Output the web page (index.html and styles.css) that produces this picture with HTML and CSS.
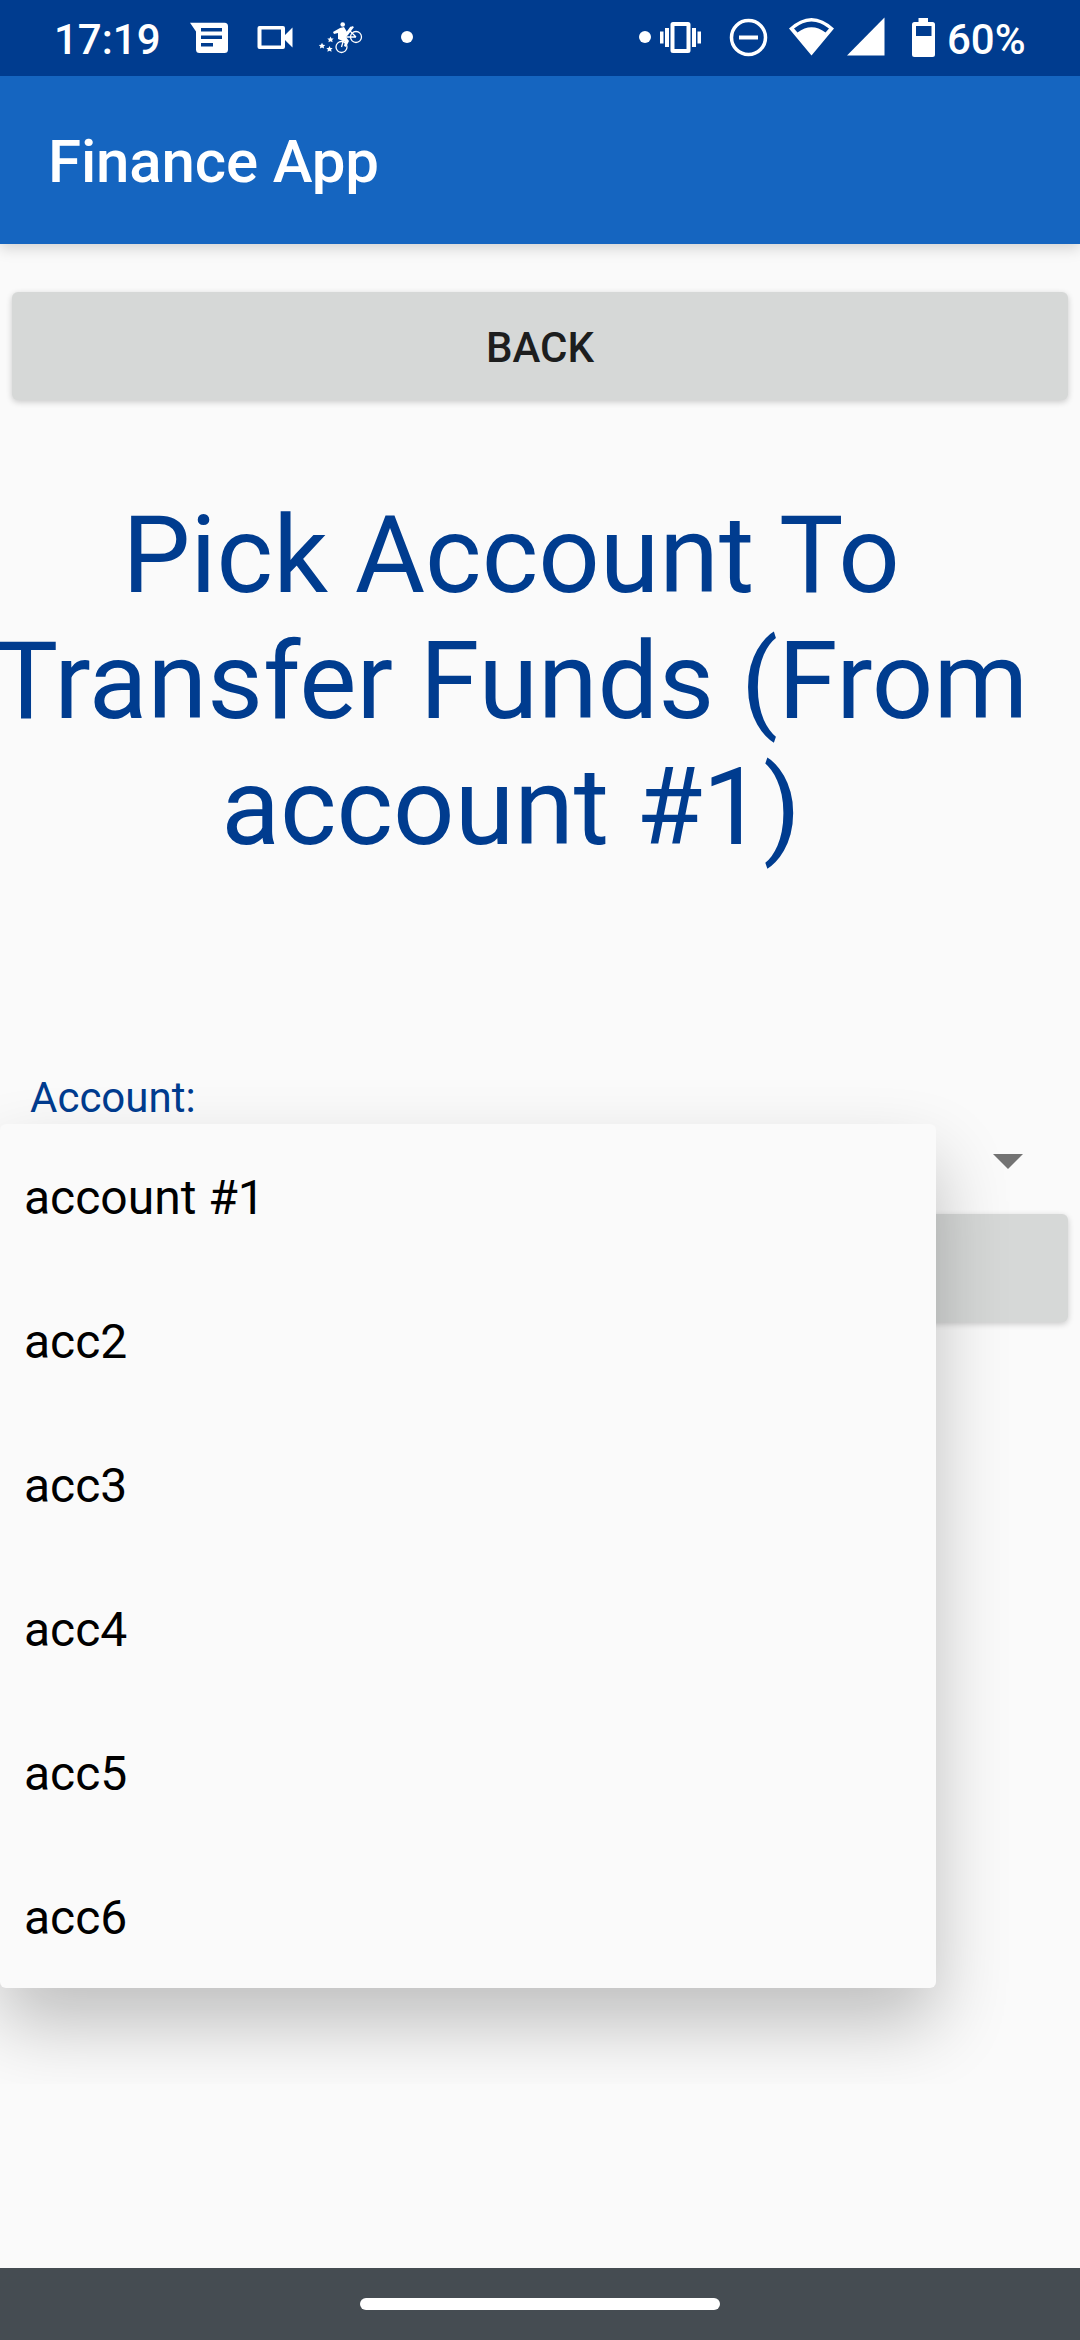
FILE: index.html
```html
<!DOCTYPE html>
<html lang="en">
<head>
<meta charset="utf-8">
<title>Finance App</title>
<link rel="stylesheet" href="styles.css">
</head>
<body>
<div class="screen">
  <header class="status-bar">
    <span class="clock">17:19</span>
    <svg class="status-icons status-left" width="260" height="76" viewBox="180 0 260 76" fill="#fff">
      <path fill-rule="evenodd" d="M190 22.700H224.500a3.500 3.500 0 0 1 3.500 3.500V49.500a3.500 3.500 0 0 1-3.500 3.500H199.500a3.500 3.500 0 0 1-3.500-3.500V31.500ZM201 28v3.500h21V28ZM201 35.500v3.500h21v-3.500ZM201 43v3.500h12V43Z"/>
      <path fill-rule="evenodd" d="M259.500 26h23.500a2 2 0 0 1 2 2V35l7.500-7.500v20L285 40v7a2 2 0 0 1-2 2h-23.500a2 2 0 0 1-2-2V28a2 2 0 0 1 2-2ZM261.500 29.500v16h19.500v-16Z"/>
      <g fill="none" stroke="#fff" stroke-width="1.300">
        <circle cx="341.500" cy="47" r="5.500"/>
        <circle cx="356" cy="37" r="5.500"/>
        <path d="M341.500 47L345 35l6-8M345 37l11 0M349 30l7 7"/>
      </g>
      <circle cx="342.700" cy="24.500" r="2.300"/>
      <path d="M333 32l7-4 4-1 3 5 5-6 2 1-6 8-2 2 3 4-3 6-2-1 1-4-7-3 0-6-4 1Z"/>
      <path d="M322 42.800l1 1.900 2.200.2-1.600 1.500.5 2.200-2.100-1.100-2.100 1.100.5-2.200-1.600-1.500 2.200-.2ZM330.500 36.500l1 1.900 2.200.2-1.600 1.500.5 2.200-2.100-1.100-2.100 1.100.5-2.200-1.600-1.500 2.200-.2ZM329.500 46l1 1.900 2.200.2-1.600 1.500.5 2.200-2.100-1.100-2.100 1.100.5-2.200-1.600-1.500 2.200-.2Z"/>
      <circle cx="407" cy="37" r="6"/>
    </svg>
    <svg class="status-icons status-right" width="306" height="76" viewBox="636 0 306 76" fill="#fff">
      <circle cx="645" cy="37" r="6"/>
      <path fill-rule="evenodd" d="M673 22h15a2.500 2.500 0 0 1 2.500 2.500v26a2.500 2.500 0 0 1-2.500 2.500h-15a2.500 2.500 0 0 1-2.500-2.500v-26a2.500 2.500 0 0 1 2.500-2.500ZM674.500 26v23h12V26Z"/>
      <path d="M660 31.500h3.500v12H660ZM665 28h4v19h-4ZM692 28h4v19h-4ZM697.500 31.500h3.500v12h-3.500Z"/>
      <circle cx="748.500" cy="37.500" r="17" fill="none" stroke="#fff" stroke-width="3.500"/>
      <path d="M739 35.500h19v4h-19Z"/>
      <path fill-rule="evenodd" d="M789 28.500Q811.500 7.500 834 28.500L811.500 55.500ZM794 28.500L797.500 32.500Q811.500 22 825.500 32.500L829 28.500Q811.500 14.500 794 28.500Z"/>
      <path d="M884.500 17.500V55.500H847Z"/>
      <path fill-rule="evenodd" d="M918.500 18h9.500v4h4.500a2.500 2.500 0 0 1 2.500 2.500v30a2.500 2.500 0 0 1-2.500 2.500h-18a2.500 2.500 0 0 1-2.500-2.500v-30a2.500 2.500 0 0 1 2.500-2.500h4ZM916 26v10h15.500V26Z"/>
    </svg>
    <span class="battery">60%</span>
  </header>
  <div class="app-bar"><span class="app-title">Finance App</span></div>
  <main class="content">
    <button class="button">BACK</button>
    <h1 class="heading">Pick Account To<br>Transfer Funds (From<br>account #1)</h1>
    <div class="label">Account:</div>
    <div class="spinner">
      <svg width="30" height="15" viewBox="0 0 30 15"><path d="M0 0H30L15 15Z" fill="#737373"/></svg>
      <ul class="dropdown">
        <li>account #1</li>
        <li>acc2</li>
        <li>acc3</li>
        <li>acc4</li>
        <li>acc5</li>
        <li>acc6</li>
      </ul>
    </div>
    <div class="button"></div>
  </main>
  <footer class="nav-bar"><span class="nav-handle"></span></footer>
</div>
</body>
</html>
```
FILE: styles.css
```css
* { box-sizing: border-box; }

body {
  margin: 0;
  font-family: Roboto, sans-serif;
}

.screen {
  display: flex;
  flex-direction: column;
  width: 1080px;
  height: 2340px;
  overflow: hidden;
  background: #fafafa;
}

.status-bar {
  display: flex;
  flex: none;
  align-items: center;
  height: 76px;
  padding: 0 54px;
  background: #003c8f;
  color: #fff;
  font-size: 42px;
  font-weight: 500;
  line-height: 76px;
}

.clock,
.battery {
  height: 76px;
  padding-top: 2px;
}

.clock { width: 126px; }
.status-icons { flex: none; }
.status-right { margin-left: 196px; }
.battery { padding-left: 5px; }

.app-bar {
  z-index: 1;
  display: flex;
  flex: none;
  align-items: center;
  height: 168px;
  padding: 0 48px;
  background: #1565c0;
  color: #fff;
  clip-path: inset(0 0 -30px 0);
  box-shadow: 0 4px 14px rgba(0, 0, 0, 0.17);
}

.app-title {
  padding-top: 3px;
  font-size: 60px;
  font-weight: 500;
  letter-spacing: -0.15px;
}

.content {
  display: flex;
  flex: 1;
  flex-direction: column;
  padding-top: 48px;
}

.button {
  flex: none;
  height: 108px;
  margin: 0 12px;
  padding: 3px 0 0;
  border: 0;
  border-radius: 6px;
  background: #d6d8d7;
  box-shadow: 0 2px 6px rgba(0, 0, 0, 0.2);
  color: #1d1e1e;
  font-family: inherit;
  font-size: 42px;
  font-weight: 500;
}

.heading {
  width: 1062px;
  margin: 92px 0 0 -20px;
  color: #003c8f;
  font-size: 108px;
  font-weight: 400;
  line-height: 126px;
  text-align: center;
  white-space: nowrap;
}

.label {
  height: 51px;
  margin: 203px 0 0 30px;
  color: #003c8f;
  font-size: 42px;
  line-height: 50px;
}

.spinner {
  position: relative;
  display: flex;
  align-items: center;
  justify-content: flex-end;
  height: 90px;
  padding: 0 57px 15px 0;
}

.dropdown {
  position: absolute;
  top: 0;
  left: 0;
  z-index: 2;
  width: 936px;
  margin: 0;
  padding: 0;
  list-style: none;
  border-radius: 6px;
  background: #fafafa;
  box-shadow: 0 36px 72px rgba(0, 0, 0, 0.24);
  clip-path: inset(-60px -120px -96px 0);
}

.dropdown li {
  height: 144px;
  padding: 2px 24px 0;
  color: #000;
  font-size: 48px;
  line-height: 144px;
}

.nav-bar {
  display: flex;
  flex: none;
  align-items: center;
  justify-content: center;
  height: 72px;
  background: #454c52;
}

.nav-handle {
  width: 360px;
  height: 12px;
  border-radius: 6px;
  background: #fff;
}
```
